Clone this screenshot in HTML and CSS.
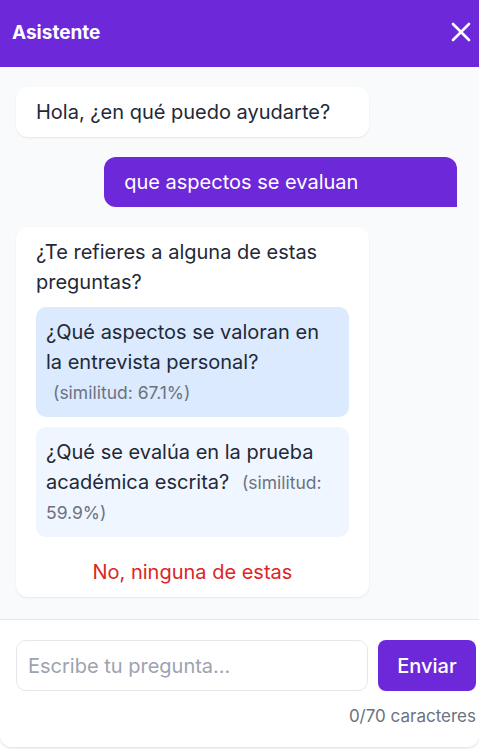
FILE: index.html
```html
<!DOCTYPE html>
<html lang="es">
<head>
<meta charset="utf-8">
<title>Asistente</title>
<link rel="stylesheet" href="styles.css">
</head>
<body>
<div class="widget">
  <header class="header">
    <span class="title">Asistente</span>
    <button class="close" aria-label="Cerrar">
      <svg width="20" height="20" viewBox="0 0 20 20"><path d="M2 2L18 18M18 2L2 18" stroke="#fff" stroke-width="2.6" stroke-linecap="round"/></svg>
    </button>
  </header>
  <main class="messages">
    <div class="msg bot">Hola, ¿en qué puedo ayudarte?</div>
    <div class="msg user">que aspectos se evaluan</div>
    <div class="msg bot suggest">
      <div class="suggest-text">¿Te refieres a alguna de estas preguntas?</div>
      <div class="option option-active">¿Qué aspectos se valoran en la entrevista personal? <span class="sim">(similitud: 67.1%)</span></div>
      <div class="option">¿Qué se evalúa en la prueba académica escrita? <span class="sim">(similitud: 59.9%)</span></div>
      <button class="none">No, ninguna de estas</button>
    </div>
  </main>
  <footer class="footer">
    <div class="input-row">
      <input class="input" type="text" placeholder="Escribe tu pregunta...">
      <button class="send">Enviar</button>
    </div>
    <div class="counter">0/70 caracteres</div>
  </footer>
</div>
</body>
</html>
```

FILE: styles.css
```css
* { box-sizing: border-box; }
html, body { margin: 0; padding: 0; }
body {
  background: #ffffff;
  font-family: Inter, "Noto Sans", sans-serif;
  color: #1f2937;
  width: 479px;
  height: 749px;
  overflow: hidden;
}
.widget {
  width: 479px;
  height: 747px;
  display: flex;
  flex-direction: column;
  background: #f9fafb;
  border-radius: 0 0 12px 12px;
  box-shadow: 0 1px 3px rgba(0,0,0,0.15);
  overflow: hidden;
}
.header {
  height: 67px;
  flex: none;
  background: #6d28d9;
  display: flex;
  align-items: center;
  justify-content: space-between;
  padding: 0 8px 0 12px;
}
.title {
  color: #fff;
  font-weight: 700;
  font-size: 19px;
  margin-top: -2px;
}
.close {
  background: none;
  border: none;
  padding: 0;
  width: 20px;
  height: 20px;
  display: flex;
  cursor: pointer;
  margin-top: -3px;
}
.messages {
  flex: none;
  padding: 20px 22px 22px 16px;
  display: flex;
  flex-direction: column;
  gap: 20px;
}
.msg {
  width: 80%;
  font-size: 20px;
  line-height: 30px;
  padding: 10px 20px;
  border-radius: 12px;
}
.bot {
  align-self: flex-start;
  background: #fff;
  color: #1f2937;
  box-shadow: 0 1px 2px rgba(0,0,0,0.08);
}
.user {
  align-self: flex-end;
  background: #6d28d9;
  color: #fff;
  border-radius: 12px 12px 0 12px;
}
.suggest {
  display: flex;
  flex-direction: column;
  gap: 10px;
  padding-bottom: 10px;
}
.option {
  background: #eff6ff;
  border-radius: 10px;
  padding: 10px 10px;
  color: #1f2937;
  cursor: pointer;
}
.option-active { background: #dbeafe; }
.sim {
  color: #6b7280;
  font-size: 17.5px;
  line-height: 20px;
  margin-left: 7px;
}
.none {
  background: none;
  border: none;
  font-family: inherit;
  font-size: 20px;
  line-height: 30px;
  color: #dc2626;
  padding: 10px 0 0;
  cursor: pointer;
}
.footer {
  flex: 1;
  background: #fff;
  border-top: 1px solid #e5e7eb;
  padding: 20px 3px 0 16px;
}
.input-row {
  display: flex;
  gap: 10px;
}
.input {
  width: 352px;
  height: 51px;
  border: 1px solid #e5e7eb;
  border-radius: 10px;
  padding: 0 11px;
  font-family: inherit;
  font-size: 20px;
  color: #1f2937;
  outline: none;
}
.input::placeholder { color: #9ca3af; }
.send {
  flex: 1;
  height: 51px;
  border: none;
  border-radius: 8px;
  background: #6d28d9;
  color: #fff;
  font-family: inherit;
  font-size: 20px;
  font-weight: 500;
  cursor: pointer;
}
.counter {
  text-align: right;
  font-size: 17px;
  color: #6b7280;
  margin-top: 14px;
  line-height: 22px;
}
```
